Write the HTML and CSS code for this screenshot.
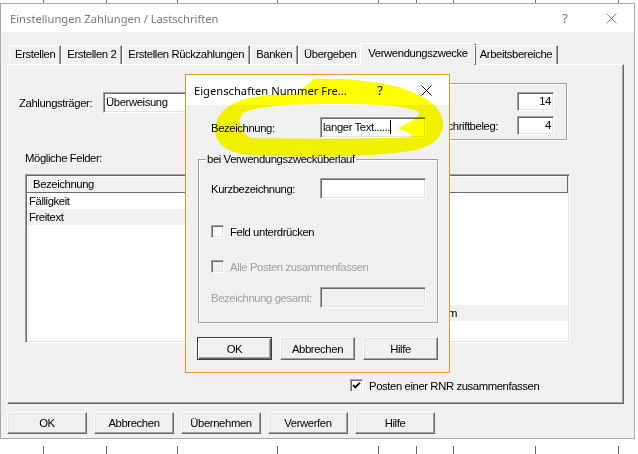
FILE: index.html
```html
<!DOCTYPE html>
<html lang="de">
<head>
    <meta charset="utf-8">
    <title>Einstellungen Zahlungen / Lastschriften</title>
    <link rel="stylesheet" href="styles.css">
</head>
<body>
    <div class="strip"></div>

    <div class="window">
        <div class="titlebar">
            <span class="title">Einstellungen Zahlungen / Lastschriften</span>
            <span class="caption-btn">?</span>
            <span class="caption-btn">
                <svg width="11" height="11" viewBox="0 0 11 11"><path d="M0.5 0.5 L10.5 10.5 M10.5 0.5 L0.5 10.5" stroke="#8a8a8a" stroke-width="1"/></svg>
            </span>
        </div>

        <div class="client">
            <div class="tabs">
                <div class="tab">Erstellen</div>
                <div class="tab">Erstellen 2</div>
                <div class="tab">Erstellen Rückzahlungen</div>
                <div class="tab">Banken</div>
                <div class="tab">Übergeben</div>
                <div class="tab active">Verwendungszwecke</div>
                <div class="tab">Arbeitsbereiche</div>
            </div>

            <div class="panel">
                <div class="top-row">
                    <div class="field">
                        <span class="field-label">Zahlungsträger:</span>
                        <div class="edit combo">Überweisung</div>
                    </div>
                    <div class="group limits">
                        <span class="limit-label">Zeichen/Zeile:</span>
                        <div class="edit num">14</div>
                        <span class="limit-label">Zeilen pro Lastschriftbeleg:</span>
                        <div class="edit num">4</div>
                    </div>
                </div>

                <div class="caption">Mögliche Felder:</div>

                <div class="lists">
                    <div class="listview">
                        <div class="lv-header">Bezeichnung</div>
                        <div class="lv-row">Fälligkeit</div>
                        <div class="lv-row selected">Freitext</div>
                    </div>
                    <div class="listview">
                        <div class="lv-header">Bezeichnung</div>
                        <div class="lv-row">Kunde</div>
                        <div class="lv-row">Rechnungsnr.</div>
                        <div class="lv-row">Betrag</div>
                        <div class="lv-row">Skonto</div>
                        <div class="lv-row">Währung</div>
                        <div class="lv-row">Text 1</div>
                        <div class="lv-row">Text 2</div>
                        <div class="lv-row selected">Rechnungsdatum</div>
                        <div class="lv-row">Valuta</div>
                    </div>
                </div>

                <label class="check-row rnr">
                    <span class="checkbox">
                        <svg width="11" height="11" viewBox="0 0 11 11"><path d="M2 5 L4.3 7.4 L9 2.6" fill="none" stroke="#000" stroke-width="1.8"/></svg>
                    </span>
                    Posten einer RNR zusammenfassen
                </label>
            </div>

            <div class="buttons">
                <div class="btn">OK</div>
                <div class="btn">Abbrechen</div>
                <div class="btn">Übernehmen</div>
                <div class="btn">Verwerfen</div>
                <div class="btn">Hilfe</div>
            </div>
        </div>
    </div>

    <div class="strip strip-bottom"></div>

    <!-- modal dialog over the main window -->
    <div class="dialog">
        <div class="titlebar">
            <span class="title">Eigenschaften Nummer Fre...</span>
            <span class="caption-btn">?</span>
            <span class="caption-btn">
                <svg width="11" height="11" viewBox="0 0 11 11"><path d="M0.5 0.5 L10.5 10.5 M10.5 0.5 L0.5 10.5" stroke="#000" stroke-width="1"/></svg>
            </span>
        </div>
        <div class="dialog-body">
            <div class="dlg-row first">
                <span class="dlg-label">Bezeichnung:</span>
                <div class="edit dlg-edit">langer Text......<span class="caret"></span></div>
            </div>

            <fieldset class="overflow-group">
                <legend>bei Verwendungszwecküberlauf</legend>
                <div class="dlg-row">
                    <span class="dlg-label">Kurzbezeichnung:</span>
                    <div class="edit dlg-edit"></div>
                </div>
                <label class="check-row suppress">
                    <span class="checkbox"></span>
                    Feld unterdrücken
                </label>
                <label class="check-row combine disabled">
                    <span class="checkbox"></span>
                    Alle Posten zusammenfassen
                </label>
                <div class="dlg-row total disabled">
                    <span class="dlg-label">Bezeichnung gesamt:</span>
                    <div class="edit dlg-edit"></div>
                </div>
            </fieldset>

            <div class="dlg-buttons">
                <div class="btn default">OK</div>
                <div class="btn">Abbrechen</div>
                <div class="btn">Hilfe</div>
            </div>
        </div>
    </div>

    <!-- yellow highlighter stroke drawn over the screenshot -->
    <svg class="marker" width="638" height="454" viewBox="0 0 638 454">
        <path fill="#ffff00" fill-rule="evenodd" d="
            M 314 79
            C 350 78, 385 82, 407 90
            C 428 98, 442 108, 443 122
            C 444 136, 434 147, 410 151
            C 370 157, 300 158, 250 155
            C 228 153, 217 145, 215 132
            C 214 118, 223 106, 245 99
            C 262 95, 280 94, 298 93
            Z
            M 243 113
            C 255 106, 290 104, 330 104
            C 375 104, 405 105, 419 112
            C 421 117, 410 122, 398 128
            C 405 131, 412 134, 412 137
            C 380 139, 290 139, 252 138
            C 240 134, 237 120, 243 113
            Z"/>
    </svg>
</body>
</html>
```

FILE: styles.css
```css
* {
    box-sizing: border-box;
}

body {
    margin: 0;
    width: 638px;
    height: 454px;
    overflow: hidden;
    position: relative;
    background: #fff;
    color: #000;
    font-family: "Liberation Sans", Arial, sans-serif;
    font-size: 11.3px;
    letter-spacing: -0.4px;
}

/* windows lying behind the dialog */
.strip {
    height: 3px;
    background-image:
        linear-gradient(#6a6a6a, #6a6a6a), linear-gradient(#6a6a6a, #6a6a6a),
        linear-gradient(#6a6a6a, #6a6a6a), linear-gradient(#6a6a6a, #6a6a6a),
        linear-gradient(#6a6a6a, #6a6a6a), linear-gradient(#6a6a6a, #6a6a6a),
        linear-gradient(#6a6a6a, #6a6a6a), linear-gradient(#6a6a6a, #6a6a6a),
        linear-gradient(#6a6a6a, #6a6a6a);
    background-size: 1px 100%;
    background-repeat: no-repeat;
    background-position: 43px 0, 106px 0, 177px 0, 277px 0, 378px 0, 416px 0, 453px 0, 535px 0, 618px 0;
}

.strip-bottom {
    height: 8px;
    margin-top: 7px;
}

.window {
    width: 635px;
    height: 436px;
    border: 1px solid #aaaaaa;
    display: flex;
    flex-direction: column;
}

.titlebar {
    height: 28px;
    flex-shrink: 0;
    display: flex;
    align-items: center;
    padding-left: 9px;
    background: #fff;
    color: #7a7a7a;
    font-family: "Noto Sans", sans-serif;
    font-size: 11.2px;
    letter-spacing: 0;
}

.title {
    flex: 1;
    white-space: nowrap;
}

.caption-btn {
    width: 46px;
    height: 100%;
    display: flex;
    align-items: center;
    justify-content: center;
    font-size: 13px;
}

.client {
    flex: 1;
    background: #f0f0f0;
    padding: 11px 10px 0 6px;
}

/* tabs */
.tabs {
    display: flex;
    align-items: flex-end;
    height: 21px;
    padding-left: 2px;
    position: relative;
    z-index: 1;
}

.tab {
    height: 19px;
    padding: 0 5px;
    border-top: 1px solid #fff;
    border-left: 1px solid #fff;
    border-right: 1px solid #696969;
    box-shadow: inset -1px 0 0 #a0a0a0;
    line-height: 17px;
    white-space: nowrap;
}

.tab.active {
    height: 22px;
    margin: 0 -2px -1px;
    padding: 0 7px 2px;
    background: #f0f0f0;
    line-height: 18px;
}

.panel {
    height: 340px;
    border: 1px solid;
    border-color: #fff #696969 #696969 #fff;
    box-shadow: inset -1px -1px 0 #a0a0a0;
    padding: 18px 0 0 11px;
}

.top-row {
    display: flex;
    height: 57px;
}

.field {
    display: flex;
    align-items: center;
    height: 21px;
    margin-top: 9px;
}

.field-label {
    width: 84px;
}

.edit {
    height: 21px;
    background: #fff;
    border: 1px solid;
    border-color: #a0a0a0 #fff #fff #a0a0a0;
    box-shadow: inset 1px 1px 0 #696969, inset -1px -1px 0 #e3e3e3;
    padding: 0 2px;
    line-height: 19px;
    white-space: nowrap;
    overflow: hidden;
}

.combo {
    width: 160px;
}

.group {
    border: 1px solid #a0a0a0;
    box-shadow: inset 1px 1px 0 #fff, 1px 1px 0 #fff;
}

.limits {
    width: 250px;
    margin: 0 56px 0 auto;
    padding: 8px 12px 0 0;
    display: grid;
    grid-template-columns: auto 37px;
    column-gap: 19px;
    row-gap: 5px;
    justify-content: end;
    align-content: start;
}

.limit-label {
    align-self: center;
}

.num {
    height: 19px;
    line-height: 17px;
    text-align: right;
}

.caption {
    margin: 10px 0 0 6px;
    line-height: 16px;
}

.lists {
    display: flex;
    justify-content: space-between;
    width: 545px;
    height: 169px;
    margin: 8px 0 0 6px;
}

.listview {
    width: 200px;
    background: #fff;
    border: 1px solid;
    border-color: #a0a0a0 #fff #fff #a0a0a0;
    box-shadow: inset 1px 1px 0 #696969, inset -1px -1px 0 #e3e3e3;
    padding: 1px 1px 0 1px;
    overflow: hidden;
}

.lv-header {
    height: 17px;
    padding-left: 6px;
    line-height: 16px;
    background: #f0f0f0;
    border-bottom: 1px solid #696969;
    border-right: 1px solid #696969;
    box-shadow: inset 1px 1px 0 #fff;
}

.lv-row {
    height: 16px;
    padding-left: 2px;
    line-height: 16px;
    white-space: nowrap;
}

.lv-row.selected {
    background: #f0f0f0;
}

.check-row {
    display: flex;
    align-items: center;
    gap: 6px;
    height: 13px;
}

.checkbox {
    width: 13px;
    height: 13px;
    flex-shrink: 0;
    display: flex;
    align-items: center;
    justify-content: center;
    background: #fff;
    border: 1px solid;
    border-color: #a0a0a0 #fff #fff #a0a0a0;
    box-shadow: inset 1px 1px 0 #696969, inset -1px -1px 0 #e3e3e3;
}

.rnr {
    margin: 36px 0 0 331px;
}

.buttons {
    display: flex;
    gap: 7px;
    margin-top: 8px;
}

.btn {
    width: 80px;
    height: 22px;
    display: flex;
    align-items: center;
    justify-content: center;
    background: #f0f0f0;
    border: 1px solid;
    border-color: #fff #696969 #696969 #fff;
    box-shadow: inset -1px -1px 0 #a0a0a0, inset 1px 1px 0 #e3e3e3;
}

/* dialog */
.dialog {
    position: absolute;
    left: 185px;
    top: 74px;
    width: 265px;
    height: 299px;
    border: 1px solid #e8962f;
    background: #f0f0f0;
    display: flex;
    flex-direction: column;
}

.dialog .titlebar {
    height: 30px;
    padding-left: 8px;
    color: #000;
}

.dialog-body {
    padding: 12px 11px 0 11px;
}

.dlg-row {
    display: flex;
    align-items: center;
    height: 21px;
}

.dlg-row.first {
    padding-left: 14px;
}

.dlg-label {
    width: 109px;
    white-space: nowrap;
}

.dlg-edit {
    width: 106px;
}

.caret {
    display: inline-block;
    width: 1px;
    height: 14px;
    background: #000;
    vertical-align: -3px;
}

.overflow-group {
    width: 240px;
    margin: 14px 0 0 1px;
    padding: 0 0 14px 12px;
    min-width: 0;
    border: 1px solid #a0a0a0;
    box-shadow: inset 1px 1px 0 #fff, 1px 1px 0 #fff;
}

.overflow-group legend {
    margin-left: -5px;
    padding: 0 1px;
    line-height: 14px;
}

.overflow-group .dlg-row {
    margin-top: 12px;
}

.suppress {
    margin-top: 26px;
}

.combine {
    margin-top: 22px;
}

.overflow-group .total {
    margin-top: 14px;
}

.disabled {
    color: #a0a0a0;
}

.disabled .checkbox,
.disabled .edit {
    background: #f0f0f0;
}

.dlg-buttons {
    display: flex;
    gap: 8px;
    margin-top: 14px;
}

.dlg-buttons .btn {
    width: 75px;
    height: 23px;
}

.btn.default {
    border-color: #3c3c3c;
    box-shadow: inset 1px 1px 0 #fff, inset -1px -1px 0 #696969, inset -2px -2px 0 #a0a0a0;
}

.marker {
    position: absolute;
    left: 0;
    top: 0;
    mix-blend-mode: multiply;
    pointer-events: none;
}
```
